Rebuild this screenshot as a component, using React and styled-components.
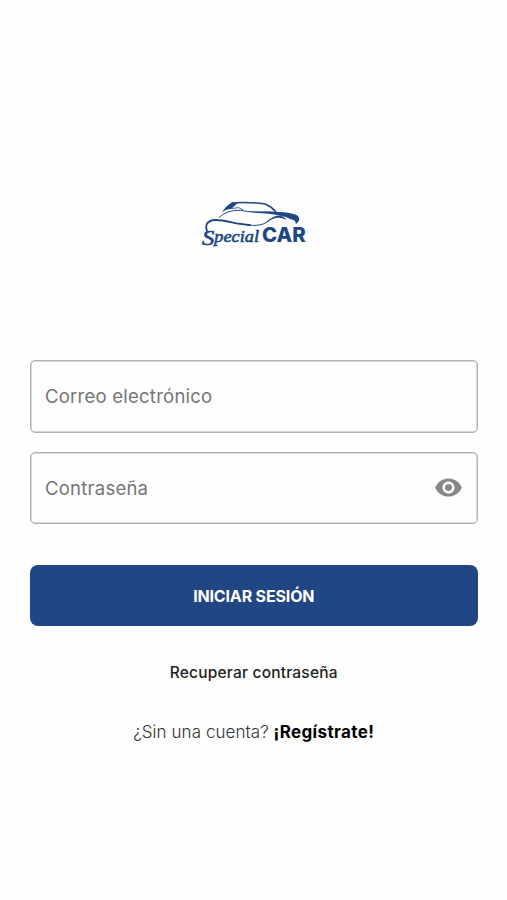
import React, { useState } from "react";
import styled, { createGlobalStyle } from "styled-components";

const GlobalStyle = createGlobalStyle`
  * {
    box-sizing: border-box;
  }
  body {
    margin: 0;
    background: #fefefe;
    font-family: Inter, Roboto, sans-serif;
  }
`;

function Logo() {
  return (
    <LogoStyled viewBox="0 0 390 210" role="img" aria-label="Special CAR">
      <path className="fill" d="M96 68 C101 56 113 45 126 37 L142 38 C137 46 128 54 119 57 C109 59 102 62 96 68Z" />
      <path d="M128 39 C153 36 194 38 226 42 Q246 51 257 65" strokeWidth="4.5" />
      <path d="M119 56 L146 53 L158 59" strokeWidth="2.5" />
      <path d="M88 82 C105 65 133 57 164 63 C204 70 238 64 270 69" strokeWidth="3" />
      <path className="fill" d="M175 65 C225 64 297 62 321 76 C331 83 329 95 317 103 C318 94 314 90 302 88 C288 78 253 71 175 66Z" />
      <path d="M150 100 C185 110 216 109 238 92" strokeWidth="3" />
      <path className="fill" d="M226 100 C247 74 278 70 290 91 C272 79 253 80 226 100Z" />
      <path d="M53 127 C43 107 50 91 76 90 C107 89 137 104 180 105" strokeWidth="5.5" />
      <text className="script" x="36" y="165" fontSize="66" textLength="37" lengthAdjust="spacingAndGlyphs">S</text>
      <text className="script" x="73" y="155" fontSize="53" textLength="134" lengthAdjust="spacingAndGlyphs">pecial</text>
      <text x="216" y="157" fontFamily="Inter, sans-serif" fontSize="60" fontWeight="800" textLength="131" lengthAdjust="spacingAndGlyphs">CAR</text>
    </LogoStyled>
  );
}

function App() {
  const [visible, setVisible] = useState(false);

  return (
    <>
      <GlobalStyle />
      <Screen>
        <Logo />
        <Form onSubmit={(e) => e.preventDefault()}>
          <Field>
            <Input type="text" placeholder="Correo electrónico" />
          </Field>
          <Field>
            <Input
              type={visible ? "text" : "password"}
              placeholder="Contraseña"
            />
            <EyeButton
              type="button"
              aria-label="Contraseña"
              onClick={() => setVisible(!visible)}
            >
              <svg viewBox="0 0 24 24" width="29" height="29" fill="currentColor">
                <path d="M12 4.5C7 4.5 2.73 7.61 1 12c1.73 4.39 6 7.5 11 7.5s9.27-3.11 11-7.5c-1.73-4.39-6-7.5-11-7.5zM12 17c-2.76 0-5-2.24-5-5s2.24-5 5-5 5 2.24 5 5-2.24 5-5 5zm0-8c-1.66 0-3 1.34-3 3s1.34 3 3 3 3-1.34 3-3-1.34-3-3-3z" />
              </svg>
            </EyeButton>
          </Field>
          <SubmitButton type="submit">INICIAR SESIÓN</SubmitButton>
        </Form>
        <RecoverLink>Recuperar contraseña</RecoverLink>
        <Register>
          ¿Sin una cuenta? <strong>¡Regístrate!</strong>
        </Register>
      </Screen>
    </>
  );
}

const Screen = styled.main`
  min-height: 900px;
  padding: 190px 29.5px 0 30px;
  display: flex;
  flex-direction: column;
  align-items: center;
`;

const LogoStyled = styled.svg`
  width: 130px;
  height: 70px;
  margin-left: 2px;
  fill: none;
  stroke: #204684;
  stroke-linecap: round;
  text,
  .fill {
    fill: #204684;
    stroke: none;
  }
  .script {
    font-family: "Liberation Serif", serif;
    font-style: italic;
    stroke: #204684;
    stroke-width: 1.8;
  }
`;

const Form = styled.form`
  width: 100%;
  margin-top: 100px;
  display: flex;
  flex-direction: column;
  gap: 19px;
`;

const Field = styled.div`
  height: 72.5px;
  display: flex;
  align-items: center;
  padding: 0 14px;
  border: 1px solid #b2b2b2;
  border-radius: 5px;
  box-shadow: inset 0 0 0 0.5px #b2b2b2;
`;

const Input = styled.input`
  flex: 1;
  min-width: 0;
  padding: 0;
  border: none;
  outline: none;
  background: transparent;
  font-family: inherit;
  font-size: 18.5px;
  letter-spacing: 0.24px;
  color: #222;
  &::placeholder {
    color: #757575;
    opacity: 1;
  }
`;

const EyeButton = styled.button`
  display: flex;
  padding: 0;
  border: none;
  background: transparent;
  color: #888;
  cursor: pointer;
`;

const SubmitButton = styled.button`
  height: 61px;
  margin-top: 22px;
  border: none;
  border-radius: 8px;
  background: #204684;
  color: #fff;
  font-family: inherit;
  font-size: 16px;
  font-weight: 700;
  letter-spacing: -0.16px;
  cursor: pointer;
`;

const RecoverLink = styled.a`
  margin-top: 37px;
  font-size: 15.5px;
  line-height: 20px;
  font-weight: 500;
  letter-spacing: 0.2px;
  color: #222;
  cursor: pointer;
`;

const Register = styled.p`
  margin: 38px 0 0;
  font-size: 17px;
  line-height: 22px;
  font-weight: 300;
  letter-spacing: 0.06px;
  color: #333;
  strong {
    font-weight: 700;
    letter-spacing: 0.36px;
    color: #000;
  }
`;

export default App;
